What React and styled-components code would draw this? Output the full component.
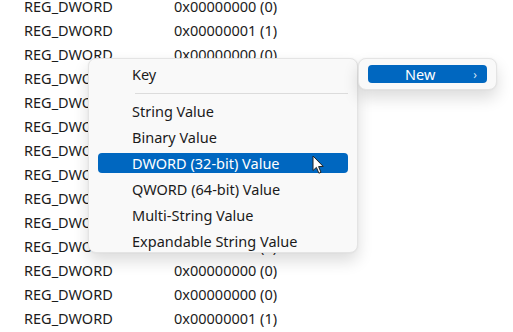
import React from "react";
import styled, { createGlobalStyle } from "styled-components";

const GlobalStyle = createGlobalStyle`
  html, body {
    margin: 0;
    padding: 0;
    background: #ffffff;
    overflow: hidden;
  }
  body {
    font-family: "Noto Sans", "Open Sans", sans-serif;
    color: #1b1b1b;
  }
`;

const Page = styled.div`
  position: relative;
  width: 513px;
  height: 332px;
  overflow: hidden;
`;

const List = styled.div`
  display: flex;
  flex-direction: column;
  margin-top: -6px;
  padding-left: 24px;
`;

const Row = styled.div`
  display: grid;
  grid-template-columns: 150px auto;
  height: 24px;
  align-items: center;
  font-size: 14.5px;
  white-space: nowrap;
`;

const Menu = styled.div`
  position: absolute;
  left: ${(p) => p.$left}px;
  top: ${(p) => p.$top}px;
  width: ${(p) => p.$width}px;
  box-sizing: border-box;
  display: flex;
  flex-direction: column;
  gap: ${(p) => p.$gap || 0}px;
  padding: ${(p) => p.$pad};
  background: #f9f9f9;
  border: 1px solid #e4e4e4;
  border-radius: 8px;
  box-shadow: 0 8px 16px rgba(0, 0, 0, 0.14), 0 0 2px rgba(0, 0, 0, 0.06);
`;

const Item = styled.div`
  display: flex;
  align-items: center;
  justify-content: space-between;
  height: ${(p) => p.$h || 20}px;
  margin: 0 9px;
  padding: 0 10px 0 ${(p) => p.$indent || 34}px;
  border-radius: 4px;
  font-size: 14.5px;
  white-space: nowrap;
  background: ${(p) => (p.$active ? "#0067c0" : "transparent")};
  color: ${(p) => (p.$active ? "#ffffff" : "#1b1b1b")};
`;

const Separator = styled.div`
  height: 1px;
  background: #dcdcdc;
  margin: 3px 9px 1px 46px;
`;

const Chevron = styled.span`
  font-size: 12px;
  color: #cfe3f5;
`;

const Cursor = styled.svg`
  position: absolute;
  left: 312px;
  top: 155px;
`;

const rows = [0, 1, 0, 0, 0, 0, 0, 0, 0, 0, 0, 0, 0, 1];

const items = [
  "String Value",
  "Binary Value",
  "DWORD (32-bit) Value",
  "QWORD (64-bit) Value",
  "Multi-String Value",
  "Expandable String Value",
];

export default function App() {
  return (
    <Page>
      <GlobalStyle />
      <List>
        {rows.map((v, i) => (
          <Row key={i}>
            <span>REG_DWORD</span>
            <span>{`0x0000000${v} (${v})`}</span>
          </Row>
        ))}
      </List>

      <Menu $left={88} $top={58} $width={270} $pad="5px 0 1px" $gap={6}>
        <Item>Key</Item>
        <Separator />
        {items.map((t) => (
          <Item key={t} $active={t.startsWith("DWORD")}>
            {t}
          </Item>
        ))}
      </Menu>

      <Menu $left={358} $top={58} $width={139} $pad="6px 0 6px">
        <Item $active $h={18} $indent={37}>
          <span>New</span>
          <Chevron>&#x203A;</Chevron>
        </Item>
      </Menu>

      <Cursor width="13" height="20" viewBox="0 0 13 20">
        <path
          d="M1 1 L1 15.5 L4.4 12.4 L6.9 18.2 L9 17.3 L6.6 11.6 L11.2 11.4 Z"
          fill="#ffffff"
          stroke="#222"
          strokeWidth="1"
          strokeLinejoin="round"
        />
      </Cursor>
    </Page>
  );
}
